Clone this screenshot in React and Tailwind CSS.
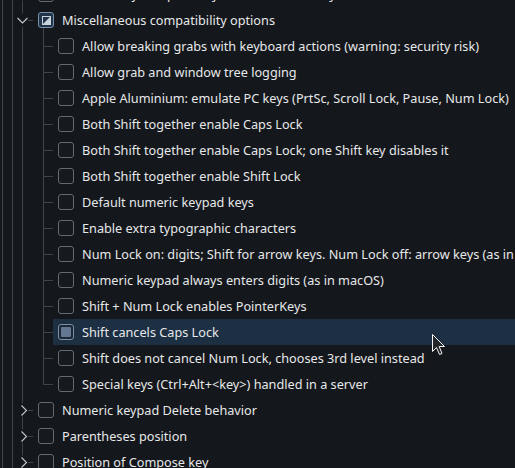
import React from 'react'

const LINE = '#3f4449'
const ROW_H = 26

const children = [
    'Allow breaking grabs with keyboard actions (warning: security risk)',
    'Allow grab and window tree logging',
    'Apple Aluminium: emulate PC keys (PrtSc, Scroll Lock, Pause, Num Lock)',
    'Both Shift together enable Caps Lock',
    'Both Shift together enable Caps Lock; one Shift key disables it',
    'Both Shift together enable Shift Lock',
    'Default numeric keypad keys',
    'Enable extra typographic characters',
    'Num Lock on: digits; Shift for arrow keys. Num Lock off: arrow keys (as in Windows)',
    'Numeric keypad always enters digits (as in macOS)',
    'Shift + Num Lock enables PointerKeys',
    'Shift cancels Caps Lock',
    'Shift does not cancel Num Lock, chooses 3rd level instead',
    'Special keys (Ctrl+Alt+<key>) handled in a server',
]

function Checkbox({ state }) {
    if (state === 'partial') {
        return (
            <div className="w-4 h-4 shrink-0 rounded-[3px] border border-[#7890aa] bg-[#22344a] flex items-center justify-center">
                <svg width="9" height="9" viewBox="0 0 9 9">
                    <rect x="0.5" y="0.5" width="8" height="8" fill="none" stroke="#c9d3dd" strokeWidth="1" />
                    <polygon points="8.5,0.5 8.5,8.5 0.5,8.5" fill="#c9d3dd" />
                </svg>
            </div>
        )
    }
    if (state === 'hover') {
        return (
            <div className="w-4 h-4 shrink-0 rounded-[3px] border border-[#7d8fa3] bg-[#1b2838] flex items-center justify-center">
                <div className="w-[10px] h-[10px] rounded-[1px] bg-[#637790]" />
            </div>
        )
    }
    return <div className="w-4 h-4 shrink-0 rounded-[3px] border border-[#656a70] bg-[#16191d]" />
}

// tree guides for a top level row (ancestor lines + chevron + branch)
function TopGuides({ expanded }) {
    const c = 13.5
    return (
        <svg width="38" height={ROW_H} className="shrink-0">
            <line x1="2.5" y1="0" x2="2.5" y2={ROW_H} stroke={LINE} />
            <line x1="12.5" y1="0" x2="12.5" y2={ROW_H} stroke={LINE} />
            <line x1="22.5" y1="0" x2="22.5" y2={c - 7} stroke={LINE} />
            <line x1="22.5" y1={c + 6} x2="22.5" y2={ROW_H} stroke={LINE} />
            <line x1="28" y1={c} x2="33" y2={c} stroke={LINE} />
            {expanded ? (
                <polyline points={`17.5,${c - 2.5} 22.5,${c + 2.5} 27.5,${c - 2.5}`} fill="none" stroke="#c5c8cc" strokeWidth="1.1" />
            ) : (
                <polyline points={`21.5,${c - 5} 26.5,${c} 21.5,${c + 5}`} fill="none" stroke="#c5c8cc" strokeWidth="1.1" />
            )}
        </svg>
    )
}

function ChildGuides({ last }) {
    const c = 13.5
    return (
        <svg width="53" height={ROW_H} className="shrink-0">
            <line x1="2.5" y1="0" x2="2.5" y2={ROW_H} stroke={LINE} />
            <line x1="12.5" y1="0" x2="12.5" y2={ROW_H} stroke={LINE} />
            <line x1="22.5" y1="0" x2="22.5" y2={ROW_H} stroke={LINE} />
            <line x1="43.5" y1="0" x2="43.5" y2={last ? c : ROW_H} stroke={LINE} />
            <line x1="43.5" y1={c} x2="53" y2={c} stroke={LINE} />
        </svg>
    )
}

function TopRow({ label, expanded, state }) {
    return (
        <div className="h-[26px] flex items-center">
            <TopGuides expanded={expanded} />
            <div className="relative h-full flex items-center">
                <Checkbox state={state} />
                {expanded && <div className="absolute left-[5px] top-[21px] bottom-0 w-px bg-[#3f4449]" />}
            </div>
            <span className="ml-2 pt-px whitespace-nowrap">{label}</span>
        </div>
    )
}

function ChildRow({ label, last, hover }) {
    return (
        <div className="h-[26px] flex items-center">
            <ChildGuides last={last} />
            <div className={`flex-1 h-full flex items-center pl-[5px] ${hover ? 'bg-[#1d2f43]' : ''}`}>
                <Checkbox state={hover ? 'hover' : 'empty'} />
                <span className="ml-2 pt-px whitespace-nowrap">{label}</span>
            </div>
        </div>
    )
}

export default function App() {
    return (
        <div
            className="relative w-[515px] h-[468px] overflow-hidden bg-[#14171b] text-[#e6e8ea] text-[12.7px]"
            style={{ fontFamily: '"Noto Sans", sans-serif' }}
        >
            <div className="-mt-[19px]">
                <TopRow label="Maintain key compatibility with old Solaris keycodes" />
                <TopRow label="Miscellaneous compatibility options" expanded state="partial" />
                {children.map((label, i) => (
                    <ChildRow
                        key={label}
                        label={label}
                        last={i === children.length - 1}
                        hover={label === 'Shift cancels Caps Lock'}
                    />
                ))}
                <TopRow label="Numeric keypad Delete behavior" />
                <TopRow label="Parentheses position" />
                <TopRow label="Position of Compose key" />
            </div>

            {/* mouse pointer */}
            <svg className="absolute left-[432px] top-[334px]" width="14" height="22" viewBox="0 0 14 22">
                <path d="M0.5 0.5 V17.5 L4.5 13.5 L7.5 20.5 L10 19.5 L7.2 12.5 H12.5 Z" fill="#232629" stroke="#f4f4f4" strokeWidth="1" strokeLinejoin="round" />
            </svg>
        </div>
    )
}
